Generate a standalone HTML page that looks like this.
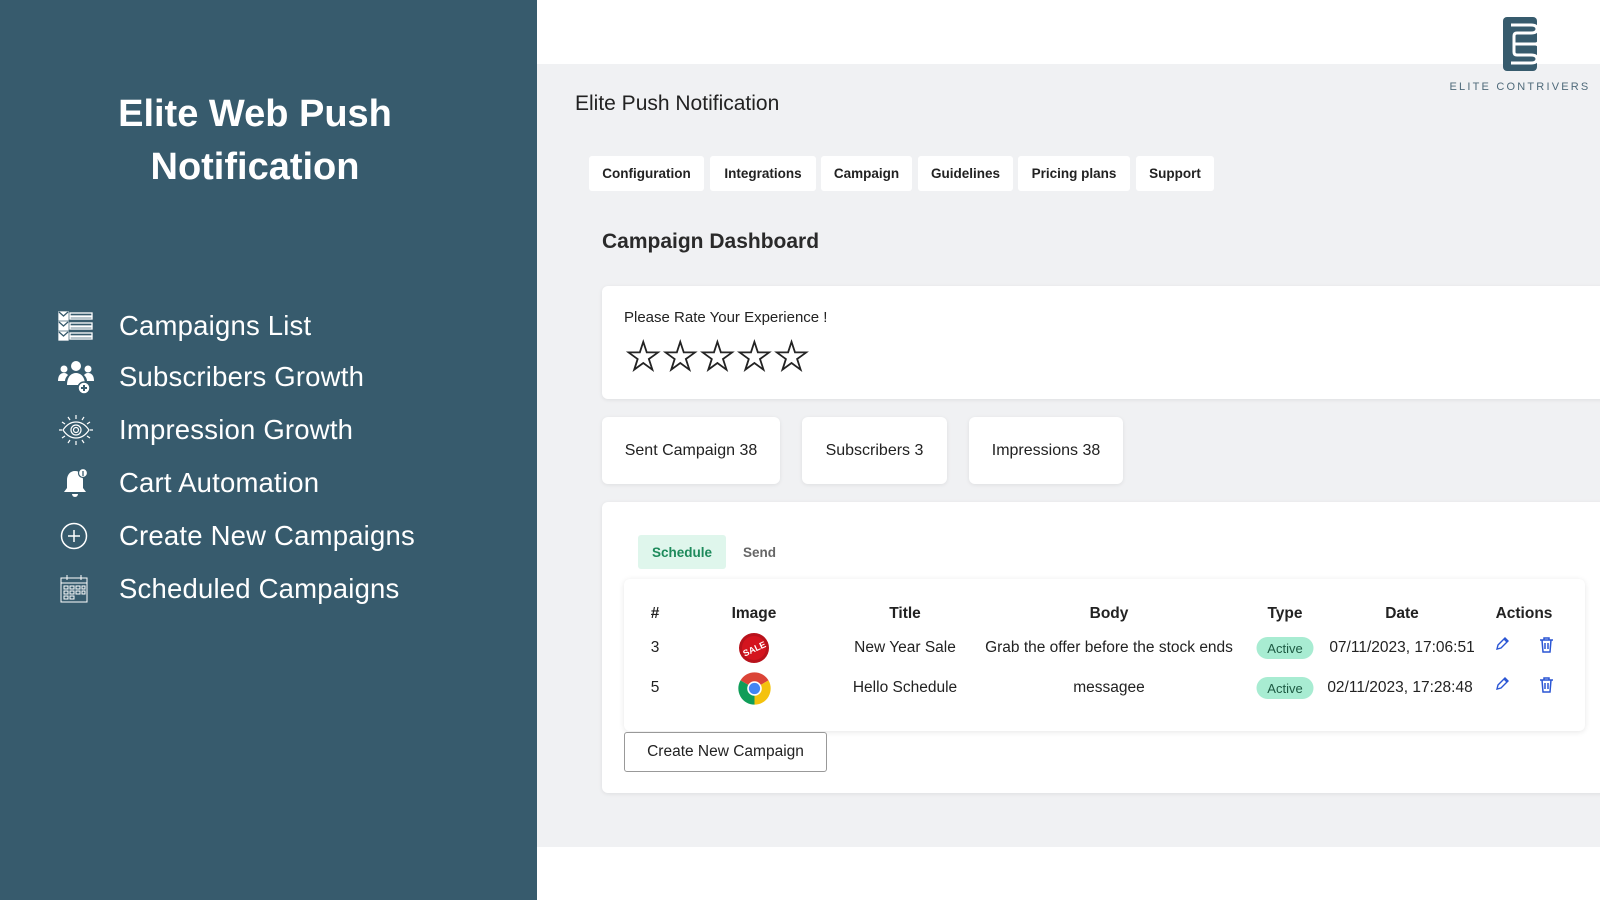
<!DOCTYPE html>
<html><head><meta charset="utf-8"><style>
*{box-sizing:border-box;margin:0;padding:0}
body{width:1600px;height:900px;position:relative;overflow:hidden;background:#fff;font-family:"Liberation Sans",sans-serif}
.side{position:absolute;left:0;top:0;width:537px;height:900px;background:#375b6d;color:#fff}
.side h1{position:absolute;left:0;width:510px;top:88px;text-align:center;font-size:38px;line-height:53px;font-weight:bold}
.mi{position:absolute;left:58px;height:40px;display:flex;align-items:center}
.mi svg{width:36px;height:36px}
.mi span{position:absolute;left:61px;font-size:27.5px;white-space:nowrap;letter-spacing:.2px}
.gray{position:absolute;left:537px;top:64px;width:1063px;height:783px;background:#f0f1f3}
.abs{position:absolute}
.tab{position:absolute;top:156px;height:35px;background:#fff;border-radius:3px;font-size:13.5px;font-weight:bold;color:#222;display:flex;align-items:center;justify-content:center}
.card{position:absolute;background:#fff;border-radius:6px;box-shadow:0 1px 4px rgba(0,0,0,.08)}
.stat{top:417px;height:67px;display:flex;align-items:center;justify-content:center;font-size:16px;color:#222}
.th{position:absolute;top:605px;font-size:15.5px;font-weight:bold;color:#222;transform:translateX(-50%);white-space:nowrap}
.td{position:absolute;font-size:15.5px;color:#222;transform:translateX(-50%);white-space:nowrap}
.badge{position:absolute;width:57px;height:22px;border-radius:11px;background:#a8ecd2;color:#1d5a43;font-size:13px;display:flex;align-items:center;justify-content:center;transform:translateX(-50%)}
</style></head><body>
<div class="side">
<h1>Elite Web Push<br>Notification</h1>
<div class="mi" style="top:306px"><svg viewBox="0 0 36 36" fill="none" stroke="#fff" stroke-width="1.3"><rect x="1" y="4" width="9" height="8" fill="#fff"/><rect x="1" y="14" width="9" height="8" fill="#fff"/><rect x="1" y="24" width="9" height="8" fill="#fff"/><path d="M1 4l4.5 4 4.5-4M1 14l4.5 4 4.5-4M1 24l4.5 4 4.5-4" stroke="#375b6d"/><rect x="12" y="5" width="22" height="3"/><rect x="12" y="9" width="22" height="2"/><rect x="12" y="15" width="22" height="3"/><rect x="12" y="19" width="22" height="2"/><rect x="12" y="25" width="22" height="3"/><rect x="12" y="29" width="22" height="2"/></svg><span>Campaigns List</span></div>
<div class="mi" style="top:357px"><svg viewBox="0 0 36 36" fill="#fff"><circle cx="18" cy="7" r="5"/><circle cx="6" cy="10" r="3.5"/><circle cx="30" cy="10" r="3.5"/><path d="M9 26c0-8 4-12 9-12s9 4 9 12z"/><path d="M0 22c0-5 2-8 6-8 2 0 3 1 4 2-2 2-3 4-3 6z"/><path d="M36 22c0-5-2-8-6-8-2 0-3 1-4 2 2 2 3 4 3 6z"/><circle cx="26" cy="29" r="6" stroke="#375b6d" stroke-width="1.5"/><path d="M26 26v6M23 29h6" stroke="#375b6d" stroke-width="2"/></svg><span>Subscribers Growth</span></div>
<div class="mi" style="top:410px"><svg viewBox="0 0 36 36" fill="none" stroke="#fff" stroke-width="1.2"><path d="M5 18c4-6 9-8 13-8s9 2 13 8c-4 6-9 8-13 8s-9-2-13-8z"/><circle cx="18" cy="18" r="5"/><circle cx="18" cy="18" r="2.5"/><path d="M18 3v4M10 5l2 3M26 5l-2 3M4 10l3 2M32 10l-3 2M1 18h3M35 18h-3M4 26l3-2M32 26l-3-2M18 33v-4M10 31l2-3M26 31l-2-3"/></svg><span>Impression Growth</span></div>
<div class="mi" style="top:463px"><svg viewBox="0 0 36 36" fill="#fff"><path d="M17 6c-5 0-8 4-8 9v8l-3 4h22l-3-4v-8c0-5-3-9-8-9z"/><path d="M14 29a3 3 0 006 0z"/><circle cx="25" cy="8" r="4.5" stroke="#375b6d" stroke-width="1.2"/><path d="M25 6v5" stroke="#375b6d" stroke-width="1.3"/></svg><span>Cart Automation</span></div>
<div class="mi" style="top:516px"><svg viewBox="0 0 36 36" fill="none" stroke="#fff" stroke-width="1.5"><circle cx="16" cy="18" r="12.5"/><path d="M16 12v12M10 18h12"/></svg><span>Create New Campaigns</span></div>
<div class="mi" style="top:569px"><svg viewBox="0 0 36 36" fill="none" stroke="#fff" stroke-width="1"><rect x="3" y="7" width="26" height="24"/><path d="M3 12h26M9 4v5M23 4v5"/><path d="M6 15h4v3H6zM12 15h4v3h-4zM18 15h4v3h-4zM24 15h3v3h-3zM6 20h4v3H6zM12 20h4v3h-4zM18 20h4v3h-4zM24 20h3v3h-3zM6 25h4v3H6zM12 25h4v3h-4z"/></svg><span>Scheduled Campaigns</span></div>
</div>
<div class="gray"></div>
<svg class="abs" style="left:1503px;top:17px" width="36" height="54" viewBox="0 0 36 54"><rect x="0" y="0" width="34" height="54" rx="4" fill="#375b6d"/><path d="M8 8h20q6 0 6 4t-6 4H14q-3 0-3 3v16q0 3 3 3h14q6 0 6 4t-6 4H8" fill="none" stroke="#fff" stroke-width="3"/><path d="M12 27h20q4 0 4-4" fill="none" stroke="#fff" stroke-width="3"/><path d="M12 27h20q4 0 4 4" fill="none" stroke="#fff" stroke-width="3"/></svg>
<div class="abs" style="left:1430px;top:81px;width:180px;text-align:center;font-size:11px;letter-spacing:2.2px;color:#4f6a7a;white-space:nowrap">ELITE CONTRIVERS</div>
<div class="abs" style="left:575px;top:92px;font-size:21px;color:#222">Elite Push Notification</div>
<div class="tab" style="left:589px;width:115px">Configuration</div>
<div class="tab" style="left:710px;width:106px">Integrations</div>
<div class="tab" style="left:821px;width:91px">Campaign</div>
<div class="tab" style="left:918px;width:95px">Guidelines</div>
<div class="tab" style="left:1018px;width:112px">Pricing plans</div>
<div class="tab" style="left:1136px;width:78px">Support</div>
<div class="abs" style="left:602px;top:230px;font-size:21px;font-weight:bold;color:#2a2a2a">Campaign Dashboard</div>
<div class="card" style="left:602px;top:286px;width:1010px;height:113px"></div>
<div class="abs" style="left:624px;top:309px;font-size:15px;color:#222">Please Rate Your Experience !</div>
<div class="abs" style="left:624px;top:334px;font-size:43px;color:#222;letter-spacing:-1.5px;line-height:46px;-webkit-text-stroke:.6px #222">☆☆☆☆☆</div>
<div class="card stat" style="left:602px;width:178px">Sent Campaign 38</div>
<div class="card stat" style="left:802px;width:145px">Subscribers 3</div>
<div class="card stat" style="left:969px;width:154px">Impressions 38</div>
<div class="card" style="left:602px;top:502px;width:1010px;height:291px"></div>
<div class="abs" style="left:638px;top:535px;width:88px;height:34px;background:#dff6ec;border-radius:3px;color:#1d8a5b;font-size:13.5px;font-weight:bold;display:flex;align-items:center;justify-content:center">Schedule</div>
<div class="abs" style="left:743px;top:545px;font-size:13.5px;font-weight:bold;color:#666">Send</div>
<div class="card" style="left:624px;top:579px;width:961px;height:152px;box-shadow:0 1px 6px rgba(0,0,0,.1)"></div>
<div class="th" style="left:655px">#</div><div class="th" style="left:754px">Image</div><div class="th" style="left:905px">Title</div><div class="th" style="left:1109px">Body</div><div class="th" style="left:1285px">Type</div><div class="th" style="left:1402px">Date</div><div class="th" style="left:1524px">Actions</div>
<div class="td" style="left:655px;top:639px">3</div><div class="td" style="left:905px;top:639px">New Year Sale</div><div class="td" style="left:1109px;top:639px">Grab the offer before the stock ends</div><div class="badge" style="left:1285px;top:637px">Active</div><div class="td" style="left:1402px;top:639px">07/11/2023, 17:06:51</div>
<div class="td" style="left:655px;top:679px">5</div><div class="td" style="left:905px;top:679px">Hello Schedule</div><div class="td" style="left:1109px;top:679px">messagee</div><div class="badge" style="left:1285px;top:677px">Active</div><div class="td" style="left:1400px;top:679px">02/11/2023, 17:28:48</div>
<svg class="abs" style="left:738px;top:632px" width="32" height="32" viewBox="0 0 32 32"><circle cx="16" cy="16" r="15" fill="#b8121b"/><circle cx="16" cy="16" r="12" fill="#d4141e"/><text x="16" y="20" font-size="9" font-weight="bold" fill="#fff" text-anchor="middle" font-family="Liberation Sans" transform="rotate(-25 16 16)">SALE</text></svg>
<svg class="abs" style="left:737px;top:671px" width="35" height="35" viewBox="0 0 36 36"><path d="M18 18L3.6 9.7A16.6 16.6 0 0132.4 9.7z" fill="#db4437"/><path d="M18 18L32.4 9.7A16.6 16.6 0 0118 34.6z" fill="#f4c20d"/><path d="M18 18L18 34.6A16.6 16.6 0 013.6 9.7z" fill="#0f9d58"/><circle cx="18" cy="18" r="7.5" fill="#fff"/><circle cx="18" cy="18" r="5.8" fill="#4285f4"/></svg>
<svg class="abs" style="left:1494px;top:636px" width="16" height="16" viewBox="0 0 16 16" fill="none" stroke="#2a55d4" stroke-width="1.4"><path d="M3 13l1-4 7-7 3 3-7 7zM10 3l3 3"/></svg>
<svg class="abs" style="left:1494px;top:676px" width="16" height="16" viewBox="0 0 16 16" fill="none" stroke="#2a55d4" stroke-width="1.4"><path d="M3 13l1-4 7-7 3 3-7 7zM10 3l3 3"/></svg>
<svg class="abs" style="left:1539px;top:636px" width="15" height="17" viewBox="0 0 15 17" fill="none" stroke="#2a55d4" stroke-width="1.5"><path d="M1 4h13M5 4V2h5v2M3 4l1 12h7l1-12M6 7v6M9 7v6"/></svg>
<svg class="abs" style="left:1539px;top:676px" width="15" height="17" viewBox="0 0 15 17" fill="none" stroke="#2a55d4" stroke-width="1.5"><path d="M1 4h13M5 4V2h5v2M3 4l1 12h7l1-12M6 7v6M9 7v6"/></svg>
<div class="abs" style="left:624px;top:732px;width:203px;height:40px;border:1px solid #999;border-radius:3px;background:#fff;display:flex;align-items:center;justify-content:center;font-size:15.5px;color:#222">Create New Campaign</div>
</body></html>
